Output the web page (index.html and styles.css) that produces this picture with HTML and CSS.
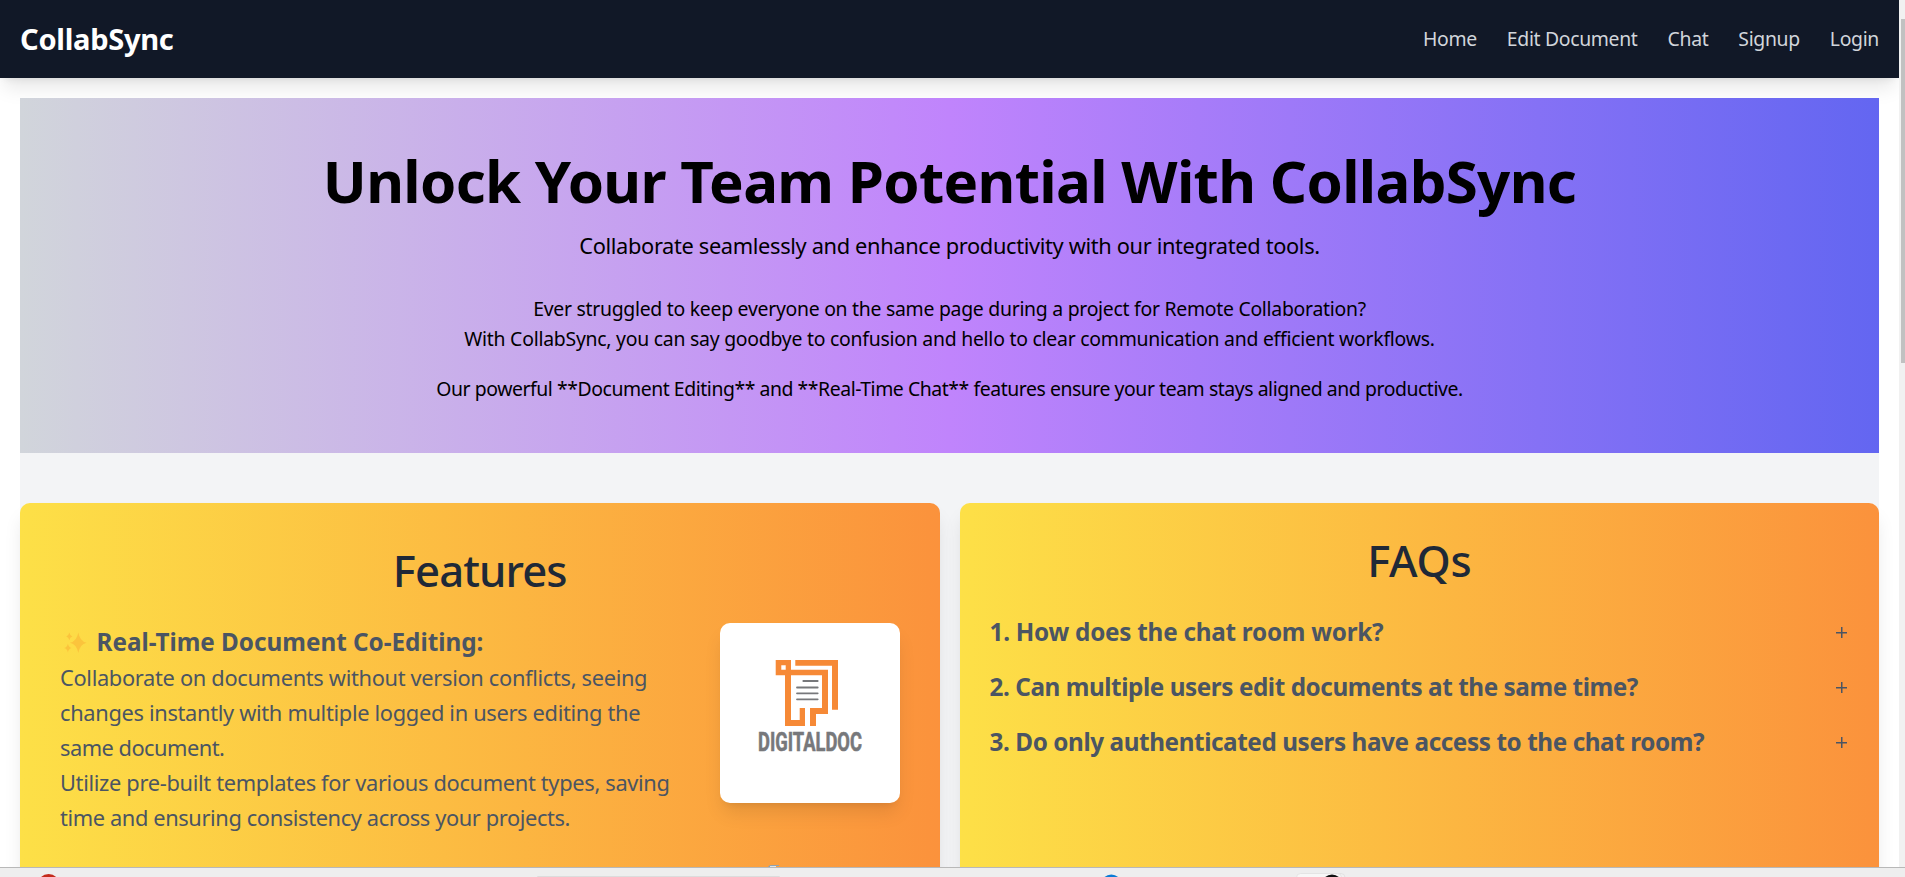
FILE: index.html
```html
<!DOCTYPE html>
<html lang="en">
<head>
<meta charset="utf-8">
<title>CollabSync</title>
<link rel="stylesheet" href="styles.css">
</head>
<body>
<div class="viewport">
  <div class="page">
    <header class="navbar">
      <div class="brand">CollabSync</div>
      <nav class="links">
        <a class="home">Home</a><a>Edit Document</a><a>Chat</a><a>Signup</a><a class="login">Login</a>
      </nav>
    </header>
    <main class="content">
      <section class="hero">
        <h1>Unlock Your Team Potential With CollabSync</h1>
        <p class="tagline">Collaborate seamlessly and enhance productivity with our integrated tools.</p>
        <div class="pitch">
          <p class="pitch-a">Ever struggled to keep everyone on the same page during a project for Remote Collaboration?</p>
          <p class="pitch-b">With CollabSync, you can say goodbye to confusion and hello to clear communication and efficient workflows.</p>
          <p class="pitch-c">Our powerful **Document Editing** and **Real-Time Chat** features ensure your team stays aligned and productive.</p>
        </div>
      </section>
      <div class="cards">
        <section class="card features">
          <h2>Features</h2>
          <div class="feature">
            <div class="copy">
              <h3><svg class="sparkles" width="38" height="38" viewBox="0 0 38 38"><path d="M18.3 10.5Q19.8 19.2 26.6 20.8Q19.8 22.4 18.3 31Q16.8 22.4 10 20.8Q16.8 19.2 18.3 10.5ZM9.3 10.6Q9.9 13.7 12.3 14.4Q9.9 15.1 9.3 18.2Q8.7 15.1 6.3 14.4Q8.7 13.7 9.3 10.6ZM7.9 21.8Q8.6 25.3 11.6 26.1Q8.6 26.9 7.9 30.4Q7.2 26.9 4.2 26.1Q7.2 25.3 7.9 21.8Z"/></svg><span>Real-Time Document Co-Editing:</span></h3>
              <p>Collaborate on documents without version conflicts, seeing</p>
              <p>changes instantly with multiple logged in users editing the</p>
              <p class="tight">same document.</p>
              <p>Utilize pre-built templates for various document types, saving</p>
              <p class="snug">time and ensuring consistency across your projects.</p>
            </div>
            <svg class="doc-logo" width="180" height="180" viewBox="0 0 180 180">
              <g class="orange">
                <path fill-rule="evenodd" d="M55.7 37H71V46.7H108V91H96V103H90V85H102V52.3H71V97H79.7V85H85V103H65V52.3H55.7ZM61.3 42.3V46.7H65.7V42.3Z"/>
                <path d="M75.3 37H118V86.7H112V42.7H75.3Z"/>
              </g>
              <path class="rules" d="M83.3 58H97.7M77 64.5H97.7M77 70.3H97.7M77 76.3H97.7"/>
              <text transform="translate(38 128.4) scale(.66 1)" textLength="157.5" lengthAdjust="spacingAndGlyphs">DIGITALDOC</text>
            </svg>
          </div>
          <svg class="next-logo" width="11" height="2" viewBox="0 0 11 2"><path d="M0 2Q1 0 3 0H11V1H7V2Z" fill="#8fa3b5"/><path d="M2 2V1H8V2Z" fill="#dfe6ea"/></svg>
        </section>
        <section class="card faqs">
          <h2>FAQs</h2>
          <div class="faq"><span class="q1">1. How does the chat room work?</span><i></i></div>
          <div class="faq"><span class="q2">2. Can multiple users edit documents at the same time?</span><i></i></div>
          <div class="faq"><span class="q3">3. Do only authenticated users have access to the chat room?</span><i></i></div>
        </section>
      </div>
    </main>
  </div>
  <div class="scrollbar"><div class="thumb"></div></div>
</div>
<footer class="taskbar">
  <svg width="1905" height="9" viewBox="0 0 1905 9">
    <circle cx="48.6" cy="17" r="11" fill="#c42b1c"/>
    <rect x="537" y="8" width="243" height="4" rx="1" fill="#dcdcdc"/>
    <circle cx="1111.3" cy="17" r="10.5" fill="#0a7bd6"/>
    <rect x="1336" y="5.5" width="9" height="12" rx="4" fill="#f1f1f1" stroke="#e2e2e2"/>
    <rect x="1296.5" y="5.5" width="45" height="12" rx="4" fill="#f7f7f7" stroke="#e4e4e4"/>
    <circle cx="1332" cy="17" r="10.5" fill="#111"/>
  </svg>
</footer>
</body>
</html>
```
FILE: styles.css
```css
* { box-sizing: border-box; }
body {
  margin: 0;
  height: 877px;
  display: flex;
  flex-direction: column;
  overflow: hidden;
  background: #fff;
  color: #000;
  font-family: "Noto Sans", "Open Sans", sans-serif;
  white-space: nowrap;
}
h1, h2, h3, p { margin: 0; }
.viewport { display: flex; height: 867px; overflow: hidden; }
.page { width: 1899px; height: 867px; overflow: hidden; }

.navbar {
  display: flex;
  align-items: center;
  justify-content: space-between;
  height: 78px;
  padding: 0 20px;
  background: #111827;
  box-shadow: 0 12.5px 18.75px -3.75px rgba(0,0,0,.1), 0 5px 7.5px -5px rgba(0,0,0,.1);
}
.brand { color: #fff; font-size: 29.1px; font-weight: 700; letter-spacing: -.3px; }
.links { display: flex; gap: 30px; padding-bottom: 2px; color: #d1d5db; font-size: 19.4px; letter-spacing: -.33px; }

.content { margin: 20px 20px 0; background: #f3f4f6; height: 900px; }
.hero {
  height: 355px;
  padding-top: 50px;
  text-align: center;
  background: linear-gradient(to right, #d1d5db, #c084fc, #6366f1);
}
.hero h1 { font-size: 58.2px; line-height: 65px; letter-spacing: -.68px; }
.tagline { margin-top: 15px; font-size: 21.82px; line-height: 35px; letter-spacing: -.346px; }
.pitch { margin-top: 31px; font-size: 19.4px; line-height: 30px; }
.pitch-a { letter-spacing: -.268px; }
.pitch-b { letter-spacing: -.241px; }
.pitch-c { margin-top: 20px; letter-spacing: -.436px; }

.cards { display: grid; grid-template-columns: 1fr 1fr; gap: 20px; margin-top: 50px; }
.card {
  height: 520px;
  border-radius: 10px;
  color: #4b5563;
  background: linear-gradient(to right, #fde047, #fb923c);
  box-shadow: 0 12.5px 18.75px -3.75px rgba(0,0,0,.1), 0 5px 7.5px -5px rgba(0,0,0,.1);
}
.card h2 {
  color: #1f2937;
  font-size: 43.65px;
  font-weight: 500;
  line-height: 50px;
  letter-spacing: -.9px;
  text-align: center;
}
.features { padding: 42px 40px 0; }
.feature { display: flex; justify-content: space-between; margin-top: 27px; }
.copy { font-size: 21.82px; line-height: 35px; letter-spacing: -.32px; }
.copy h3 { display: flex; height: 38px; line-height: 40px; font-size: 24.25px; letter-spacing: 0; }
.copy .tight { letter-spacing: -.51px; }
.copy .snug { letter-spacing: -.38px; }
.sparkles { fill: #fbc43c; margin-right: -1.5px; }
.doc-logo {
  margin-top: 1px;
  border-radius: 10px;
  background: #fff;
  box-shadow: 0 12.5px 18.75px -3.75px rgba(0,0,0,.1), 0 5px 7.5px -5px rgba(0,0,0,.1);
}
.orange { fill: #f68936; }
.rules { stroke: #77787b; stroke-width: 1.8; stroke-linecap: round; }
.doc-logo text { fill: #77787b; stroke: #77787b; stroke-width: .6; font: 700 25.8px Roboto, sans-serif; }
.next-logo { display: block; margin: 30px 0 0 708px; }

.faqs { padding: 32px 30px 0; }
.faqs h2 { letter-spacing: -.3px; margin-bottom: 29px; }
.faq {
  display: flex;
  align-items: center;
  justify-content: space-between;
  height: 35px;
  margin-bottom: 20px;
  font-size: 24.25px;
  font-weight: 700;
}
.q1 { letter-spacing: -.24px; }
.q2 { letter-spacing: -.42px; }
.q3 { letter-spacing: -.4px; }
.faq i {
  width: 11px;
  height: 11px;
  margin: 2px 2px 0 0;
  background:
    linear-gradient(#4b5563, #4b5563) 0 5px / 11px 1.5px no-repeat,
    linear-gradient(#4b5563, #4b5563) 5px 0 / 1.5px 11px no-repeat;
}

.scrollbar { width: 6px; padding: 19px 0 0 2px; background: #f1f1f1; }
.thumb { height: 344px; background: #c1c1c1; }
.taskbar { height: 10px; border-top: 1px solid #b8b8b8; background: #eee; overflow: hidden; }
.taskbar svg { display: block; }
```
